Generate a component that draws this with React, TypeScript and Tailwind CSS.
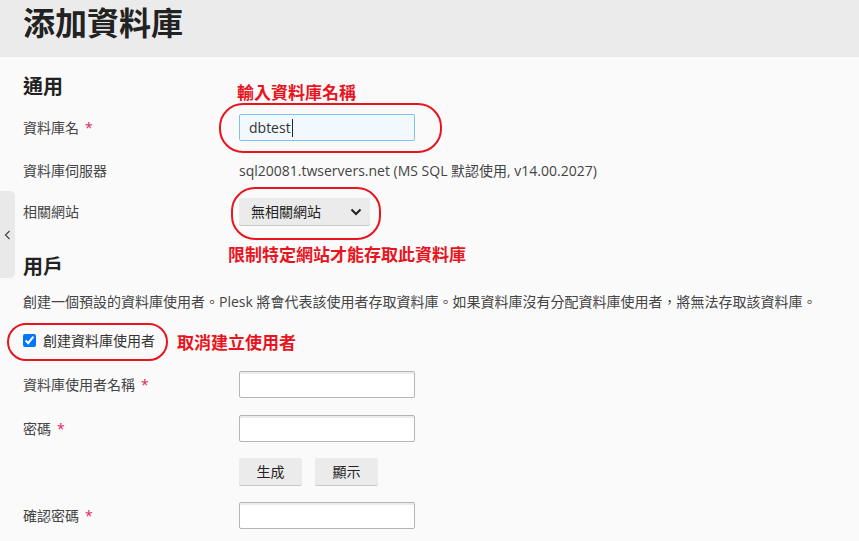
import React from "react";

const font = { fontFamily: '"Open Sans", "Noto Sans CJK TC", sans-serif' };
const noteFont = { fontFamily: '"Noto Sans CJK TC", sans-serif' };

function Label({ text, required }: { text: string; required?: boolean }) {
  return (
    <div className="w-[216px] shrink-0 text-[14px] text-[#444]">
      {text}
      {required && <span className="ml-[6px] text-[#e0245e]">*</span>}
    </div>
  );
}

function TextInput({ value, focused }: { value?: string; focused?: boolean }) {
  return (
    <div
      className={
        focused
          ? "flex h-[27px] w-[176px] items-center rounded-[2px] border border-[#7cc3ee] bg-[#f1f9ff] px-[9px] text-[14px] text-[#333]"
          : "h-[27px] w-[176px] rounded-[2px] border border-[#b5b5b5] bg-white shadow-[inset_0_2px_0_#ececec]"
      }
    >
      {value}
      {focused && <span className="ml-[1px] h-[18px] w-px bg-[#222]" />}
    </div>
  );
}

function Note({ text, className }: { text: string; className: string }) {
  return (
    <div
      style={noteFont}
      className={`absolute text-[17px] font-bold leading-none text-[#e8141e] ${className}`}
    >
      {text}
    </div>
  );
}

function Ring({ className }: { className: string }) {
  return <div className={`absolute rounded-[24px] border-2 border-[#e8141e] ${className}`} />;
}

function GrayButton({ text }: { text: string }) {
  return (
    <div className="flex h-[27px] w-[63px] items-center justify-center rounded-[2px] bg-[#ebebeb] text-[14px] text-[#222] shadow-[0_1px_0_#c9c9c9]">
      {text}
    </div>
  );
}

export default function App() {
  return (
    <div style={font} className="relative h-[541px] w-[859px] overflow-hidden bg-[#fafafa] text-[#333]">
      <div className="h-[57px] bg-[#ebebeb] pl-[23px] pt-[3px]">
        <h1 className="text-[32px] font-bold leading-[40px] text-[#222]">添加資料庫</h1>
      </div>

      <div className="absolute left-0 top-[191px] flex h-[87px] w-[15px] items-center justify-center rounded-r-[5px] bg-[#e9e9e9]">
        <svg width="7" height="10" viewBox="0 0 7 10" fill="none">
          <path d="M5.5 1L1.5 5l4 4" stroke="#444" strokeWidth="1.2" />
        </svg>
      </div>

      <div className="px-[23px]">
        <h2 className="mt-[16px] text-[20px] font-bold leading-[28px] text-[#222]">通用</h2>

        <div className="mt-[13px] flex h-[27px] items-center">
          <Label text="資料庫名" required />
          <TextInput value="dbtest" focused />
        </div>

        <div className="mt-[16px] flex h-[27px] items-center">
          <Label text="資料庫伺服器" />
          <div className="text-[14px] text-[#444]">sql20081.twservers.net (MS SQL 默認使用, v14.00.2027)</div>
        </div>

        <div className="mt-[14px] flex h-[27px] items-center">
          <Label text="相關網站" />
          <div className="flex h-[27px] w-[131px] items-center justify-between rounded-[2px] bg-[#ebebeb] pl-[12px] pr-[8px] text-[14px] text-[#222] shadow-[0_1px_0_#c9c9c9]">
            無相關網站
            <svg width="12" height="8" viewBox="0 0 12 8" fill="none">
              <path d="M1.5 1.5L6 6l4.5-4.5" stroke="#222" strokeWidth="2" />
            </svg>
          </div>
        </div>

        <h2 className="mt-[28px] text-[20px] font-bold leading-[28px] text-[#222]">用戶</h2>

        <p className="mt-[11px] text-[14px] leading-[20px] text-[#444]">
          創建一個預設的資料庫使用者。Plesk 將會代表該使用者存取資料庫。如果資料庫沒有分配資料庫使用者，將無法存取該資料庫。
        </p>

        <label className="mt-[18px] flex h-[20px] items-center gap-[7px] text-[14px] text-[#333]">
          <input type="checkbox" defaultChecked className="m-0 h-[13px] w-[13px] accent-[#0075ff]" />
          創建資料庫使用者
        </label>

        <div className="mt-[21px] flex h-[27px] items-center">
          <Label text="資料庫使用者名稱" required />
          <TextInput />
        </div>

        <div className="mt-[17px] flex h-[27px] items-center">
          <Label text="密碼" required />
          <TextInput />
        </div>

        <div className="mt-[16px] flex h-[27px] items-center">
          <div className="w-[216px] shrink-0" />
          <div className="flex gap-[13px]">
            <GrayButton text="生成" />
            <GrayButton text="顯示" />
          </div>
        </div>

        <div className="mt-[17px] flex h-[27px] items-center">
          <Label text="確認密碼" required />
          <TextInput />
        </div>
      </div>

      <Ring className="left-[219px] top-[103px] h-[50px] w-[223px]" />
      <Ring className="left-[231px] top-[187px] h-[53px] w-[150px]" />
      <Ring className="left-[7px] top-[323px] h-[38px] w-[161px]" />

      <Note text="輸入資料庫名稱" className="left-[237px] top-[83px]" />
      <Note text="限制特定網站才能存取此資料庫" className="left-[228px] top-[245px]" />
      <Note text="取消建立使用者" className="left-[177px] top-[333px]" />
    </div>
  );
}
